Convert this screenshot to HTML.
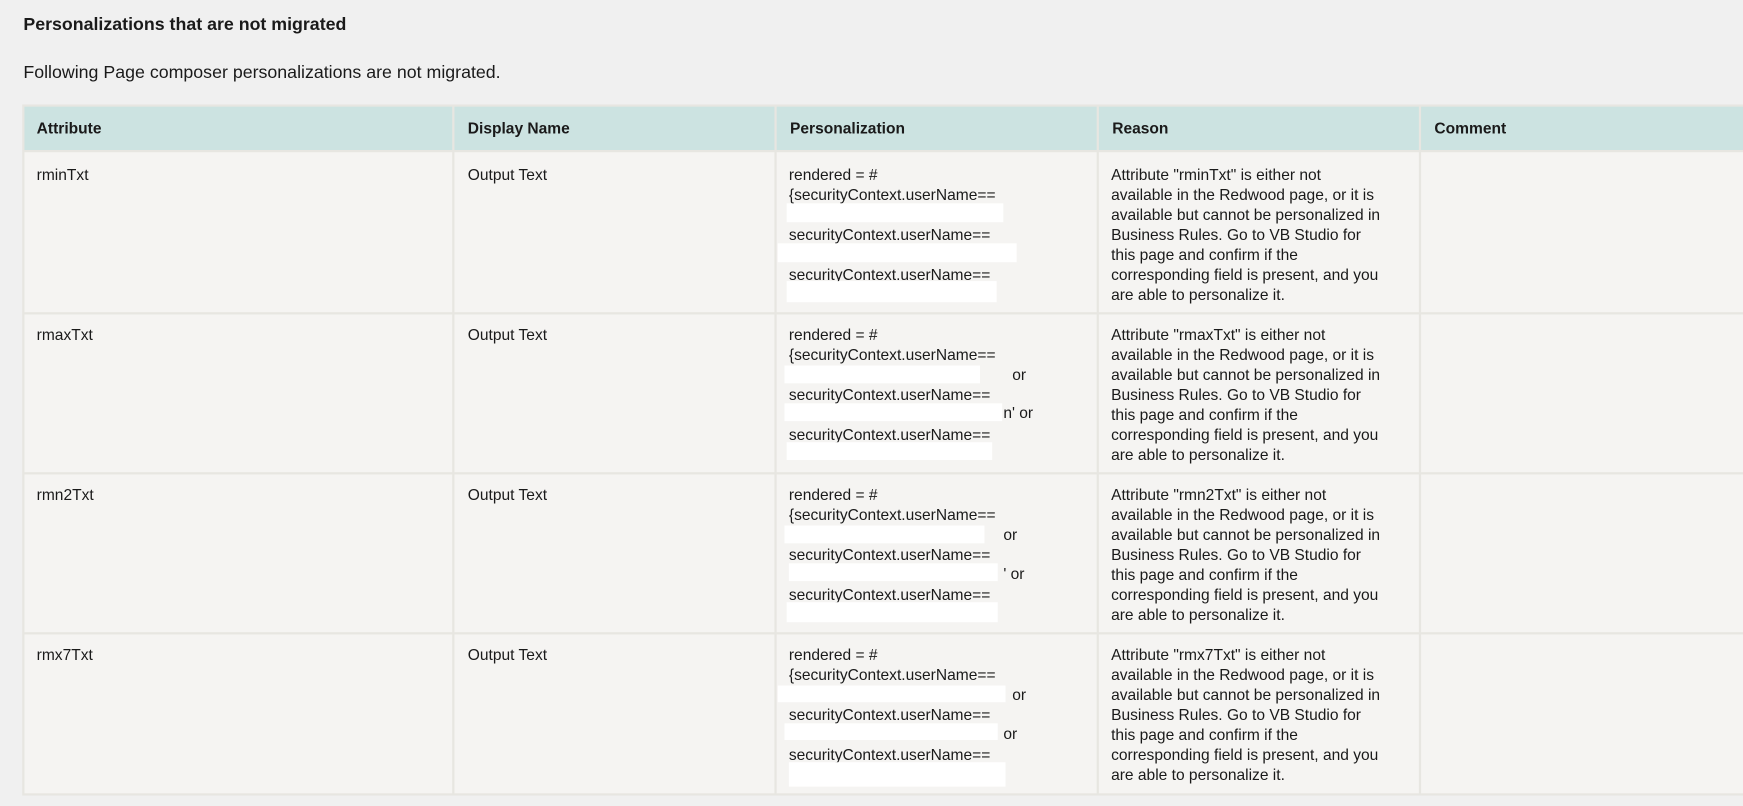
<!DOCTYPE html>
<html><head><meta charset="utf-8"><style>
html,body{margin:0;padding:0}
body{width:1743px;height:805px;background:#f0f0f0;font-family:"Liberation Sans",Arial,sans-serif;color:#1a1a1a;position:relative;overflow:hidden}
#s{position:absolute;left:0;top:0;width:1569px;height:725px;transform:scale(1.1111);transform-origin:0 0}
.a{position:absolute;white-space:nowrap;font-size:14px;line-height:18px}
.c{position:absolute;background:#f5f4f2}
.h{position:absolute;background:#cce3e1}
.w{position:absolute;background:#fff}
</style></head><body><div id="s">
<div class="a" style="left:21px;top:14px;font-size:16px;font-weight:bold">Personalizations that are not migrated</div>
<div class="a" style="left:21px;top:57px;font-size:16px">Following Page composer personalizations are not migrated.</div>
<div style="position:absolute;left:20px;top:94px;width:1549px;height:622px;background:#e7e6e1"></div>

<div class="h" style="left:22px;top:96px;width:385px;height:39px"></div>
<div class="h" style="left:409px;top:96px;width:288px;height:39px"></div>
<div class="h" style="left:699px;top:96px;width:288px;height:39px"></div>
<div class="h" style="left:989px;top:96px;width:288px;height:39px"></div>
<div class="h" style="left:1279px;top:96px;width:290px;height:39px"></div>
<div class="a" style="left:33px;top:106px;font-weight:bold">Attribute</div>
<div class="a" style="left:421px;top:106px;font-weight:bold">Display Name</div>
<div class="a" style="left:711px;top:106px;font-weight:bold">Personalization</div>
<div class="a" style="left:1001px;top:106px;font-weight:bold">Reason</div>
<div class="a" style="left:1291px;top:106px;font-weight:bold">Comment</div>

<div class="c" style="left:22px;top:137px;width:385px;height:144px"></div><div class="c" style="left:409px;top:137px;width:288px;height:144px"></div><div class="c" style="left:699px;top:137px;width:288px;height:144px"></div><div class="c" style="left:989px;top:137px;width:288px;height:144px"></div><div class="c" style="left:1279px;top:137px;width:290px;height:144px"></div>
<div class="c" style="left:22px;top:283px;width:385px;height:142px"></div><div class="c" style="left:409px;top:283px;width:288px;height:142px"></div><div class="c" style="left:699px;top:283px;width:288px;height:142px"></div><div class="c" style="left:989px;top:283px;width:288px;height:142px"></div><div class="c" style="left:1279px;top:283px;width:290px;height:142px"></div>
<div class="c" style="left:22px;top:427px;width:385px;height:142px"></div><div class="c" style="left:409px;top:427px;width:288px;height:142px"></div><div class="c" style="left:699px;top:427px;width:288px;height:142px"></div><div class="c" style="left:989px;top:427px;width:288px;height:142px"></div><div class="c" style="left:1279px;top:427px;width:290px;height:142px"></div>
<div class="c" style="left:22px;top:571px;width:385px;height:143px"></div><div class="c" style="left:409px;top:571px;width:288px;height:143px"></div><div class="c" style="left:699px;top:571px;width:288px;height:143px"></div><div class="c" style="left:989px;top:571px;width:288px;height:143px"></div><div class="c" style="left:1279px;top:571px;width:290px;height:143px"></div>

<div class="a" style="left:33px;top:148px">rminTxt</div>
<div class="a" style="left:421px;top:148px">Output Text</div>
<div class="a" style="left:710px;top:148px">rendered = #<br>{securityContext.userName==<br><br>securityContext.userName==<br><br>securityContext.userName==</div>
<div class="w" style="left:708px;top:183px;width:195px;height:17px"></div>
<div class="w" style="left:700px;top:219px;width:215px;height:17px"></div>
<div class="w" style="left:708px;top:253px;width:189px;height:19px"></div>
<div class="a" style="left:1000px;top:148px">Attribute "rminTxt" is either not<br>available in the Redwood page, or it is<br>available but cannot be personalized in<br>Business Rules. Go to VB Studio for<br>this page and confirm if the<br>corresponding field is present, and you<br>are able to personalize it.</div>

<div class="a" style="left:33px;top:292px">rmaxTxt</div>
<div class="a" style="left:421px;top:292px">Output Text</div>
<div class="a" style="left:710px;top:292px">rendered = #<br>{securityContext.userName==<br><br>securityContext.userName==<br><br>securityContext.userName==</div>
<div class="w" style="left:706px;top:329px;width:176px;height:16px"></div><div class="a" style="left:911px;top:328px">or</div>
<div class="w" style="left:706px;top:363px;width:196px;height:16px"></div><div class="a" style="left:903px;top:362px">n' or</div>
<div class="w" style="left:708px;top:398px;width:185px;height:16px"></div>
<div class="a" style="left:1000px;top:292px">Attribute "rmaxTxt" is either not<br>available in the Redwood page, or it is<br>available but cannot be personalized in<br>Business Rules. Go to VB Studio for<br>this page and confirm if the<br>corresponding field is present, and you<br>are able to personalize it.</div>

<div class="a" style="left:33px;top:436px">rmn2Txt</div>
<div class="a" style="left:421px;top:436px">Output Text</div>
<div class="a" style="left:710px;top:436px">rendered = #<br>{securityContext.userName==<br><br>securityContext.userName==<br><br>securityContext.userName==</div>
<div class="w" style="left:706px;top:473px;width:180px;height:16px"></div><div class="a" style="left:903px;top:472px">or</div>
<div class="w" style="left:710px;top:507px;width:188px;height:16px"></div><div class="a" style="left:903px;top:507px">' or</div>
<div class="w" style="left:708px;top:542px;width:190px;height:18px"></div>
<div class="a" style="left:1000px;top:436px">Attribute "rmn2Txt" is either not<br>available in the Redwood page, or it is<br>available but cannot be personalized in<br>Business Rules. Go to VB Studio for<br>this page and confirm if the<br>corresponding field is present, and you<br>are able to personalize it.</div>

<div class="a" style="left:33px;top:580px">rmx7Txt</div>
<div class="a" style="left:421px;top:580px">Output Text</div>
<div class="a" style="left:710px;top:580px">rendered = #<br>{securityContext.userName==<br><br>securityContext.userName==<br><br>securityContext.userName==</div>
<div class="w" style="left:700px;top:617px;width:205px;height:15px"></div><div class="a" style="left:911px;top:616px">or</div>
<div class="w" style="left:706px;top:651px;width:192px;height:15px"></div><div class="a" style="left:903px;top:651px">or</div>
<div class="w" style="left:710px;top:686px;width:195px;height:22px"></div>
<div class="a" style="left:1000px;top:580px">Attribute "rmx7Txt" is either not<br>available in the Redwood page, or it is<br>available but cannot be personalized in<br>Business Rules. Go to VB Studio for<br>this page and confirm if the<br>corresponding field is present, and you<br>are able to personalize it.</div>
</div></body></html>
